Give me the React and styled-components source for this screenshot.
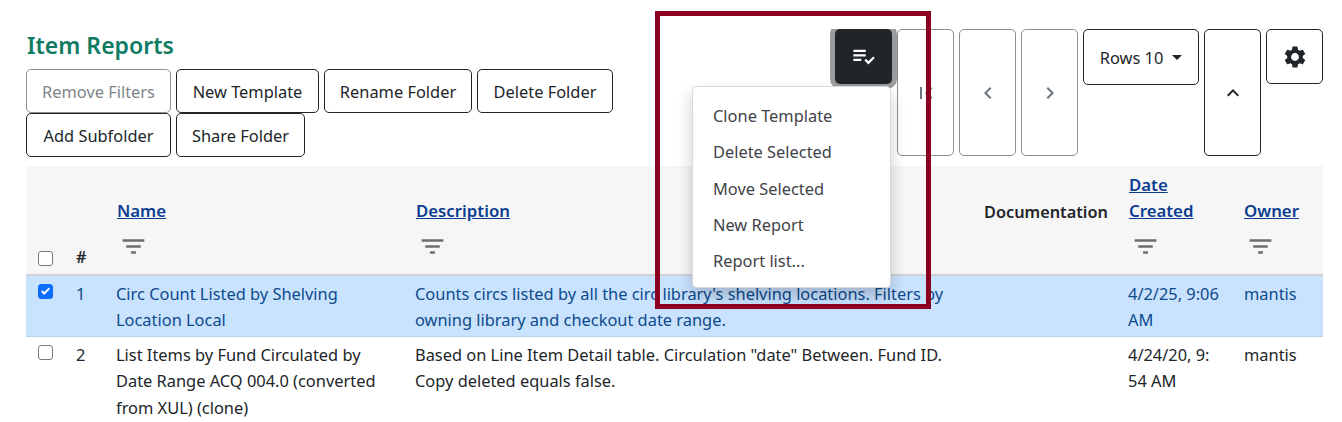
import React from "react";
import styled, { createGlobalStyle } from "styled-components";
import {
  MdPlaylistAddCheck,
  MdFirstPage,
  MdChevronLeft,
  MdChevronRight,
  MdKeyboardArrowUp,
  MdSettings,
  MdFilterList,
} from "react-icons/md";

const FONT = `"Noto Sans", "Open Sans", sans-serif`;

const GlobalStyle = createGlobalStyle`
  html, body {
    margin: 0;
    height: 422px;
    overflow: hidden;
    background: #fff;
  }
  body {
    font-family: ${FONT};
    font-size: 16.4px;
    color: #212529;
  }
`;

const Page = styled.div`
  position: relative;
  padding: 29px 19px 0 26px;
`;

const Top = styled.div`
  display: flex;
  justify-content: space-between;
  align-items: flex-start;
  height: 128px;
`;

const LeftCol = styled.div`
  width: 600px;
`;

const Title = styled.h1`
  margin: 0;
  height: 40px;
  padding-left: 1px;
  font-size: 23px;
  font-weight: 600;
  line-height: 32px;
  color: #0f7b63;
`;

const ButtonRows = styled.div`
  display: flex;
  flex-wrap: wrap;
  column-gap: 5px;
`;

const Button = styled.button`
  box-sizing: border-box;
  width: ${({ $w }) => $w}px;
  height: 44px;
  padding: 0;
  font: inherit;
  white-space: nowrap;
  color: ${({ disabled }) => (disabled ? "#80858a" : "#212529")};
  background: #fff;
  border: 1px solid ${({ disabled }) => (disabled ? "#8a8f94" : "#212529")};
  border-radius: 5px;
`;

const Toolbar = styled.div`
  display: flex;
  gap: 5px;
  align-items: flex-start;
`;

const ToolButton = styled.button`
  box-sizing: border-box;
  display: flex;
  align-items: center;
  justify-content: center;
  width: ${({ $w }) => $w || 57}px;
  height: ${({ $h }) => $h}px;
  padding: 0;
  font: inherit;
  color: ${({ disabled }) => (disabled ? "#6c757d" : "#212529")};
  background: #fff;
  border: 1px solid ${({ disabled }) => (disabled ? "#8a8f94" : "#212529")};
  border-radius: 5px;
`;

const ActionWrap = styled.div`
  position: relative;
`;

const ActionButton = styled.button`
  display: flex;
  align-items: center;
  justify-content: center;
  width: 57px;
  height: 55px;
  padding: 0;
  color: #fff;
  background: #212529;
  border: 0;
  border-radius: 5px;
  box-shadow: 0 0 0 5px #9b9c9d;
  clip-path: inset(0 -6px -6px -6px);
`;

const Menu = styled.div`
  position: absolute;
  top: 57px;
  right: 1px;
  z-index: 5;
  box-sizing: border-box;
  width: 199px;
  height: 202px;
  padding: 11px 0;
  background: #fff;
  border: 1px solid rgba(0, 0, 0, 0.15);
  border-radius: 5px;
  box-shadow: 0 8px 16px rgba(0, 0, 0, 0.2);
`;

const MenuItem = styled.div`
  height: 36.3px;
  padding-left: 20px;
  line-height: 36px;
  color: #3f4347;
  white-space: nowrap;
`;

const Caret = styled.span`
  margin-left: 9px;
  border-top: 5px solid #212529;
  border-left: 5px solid transparent;
  border-right: 5px solid transparent;
`;

const Table = styled.table`
  width: 1297px;
  margin-top: 9px;
  border-collapse: collapse;
  table-layout: fixed;
`;

const HeadCell = styled.th`
  box-sizing: border-box;
  height: 109px;
  padding: 0 8px ${({ $pb }) => $pb || 0}px;
  vertical-align: bottom;
  text-align: left;
  font-weight: 600;
  font-size: 16.3px;
  line-height: 26px;
  background: #f6f6f6;
  border-bottom: 2px solid #cfd1d3;
`;

const SortLink = styled.a`
  display: block;
  font-size: 16.8px;
  color: #0a3d91;
  text-decoration: underline;
`;

const FilterIcon = styled(MdFilterList)`
  display: block;
  margin: 8px 0 13px 2px;
  color: #6b6d70;
`;

const Row = styled.tr`
  background: ${({ $selected }) => ($selected ? "#c9e2fe" : "#fff")};
  color: ${({ $selected }) => ($selected ? "#0d4a8c" : "#212529")};
  border-bottom: 1px solid ${({ $selected }) => ($selected ? "#b6d4f2" : "transparent")};
`;

const Cell = styled.td`
  padding: 5px 8px 2px;
  vertical-align: top;
  line-height: 26.4px;
  white-space: pre-line;
`;

const TextCell = styled(Cell)`
  padding-left: 7px;
`;

const Check = styled.input`
  appearance: none;
  display: block;
  box-sizing: border-box;
  width: 15px;
  height: 15px;
  margin: ${({ $m }) => $m || "3px 0 0 4px"};
  background: #fff;
  border: 1px solid #77797c;
  border-radius: 3px;

  &:checked {
    border-color: #0d6efd;
    background: #0d6efd url("data:image/svg+xml,%3csvg xmlns='http://www.w3.org/2000/svg' viewBox='0 0 20 20'%3e%3cpath fill='none' stroke='%23fff' stroke-linecap='round' stroke-linejoin='round' stroke-width='3' d='m5 10 3 3 7-7'/%3e%3c/svg%3e") center / 100% no-repeat;
  }
`;

const RedBox = styled.div`
  position: absolute;
  left: 655px;
  top: 11px;
  z-index: 10;
  box-sizing: border-box;
  width: 276px;
  height: 298px;
  border: 5px solid #8b0020;
  pointer-events: none;
`;

const columns = [42, 41, 299, 568, 145, 115, 87];

const folderButtons = [
  { label: "Remove Filters", w: 145, disabled: true },
  { label: "New Template", w: 143 },
  { label: "Rename Folder", w: 148 },
  { label: "Delete Folder", w: 136 },
  { label: "Add Subfolder", w: 145 },
  { label: "Share Folder", w: 129 },
];

const menuItems = ["Clone Template", "Delete Selected", "Move Selected", "New Report", "Report list..."];

const rows = [
  {
    n: 1,
    selected: true,
    name: "Circ Count Listed by Shelving Location Local",
    description: "Counts circs listed by all the circ library's shelving locations. Filters by owning library and checkout date range.",
    date: "4/2/25, 9:06 AM",
  },
  {
    n: 2,
    name: "List Items by Fund Circulated by Date Range ACQ 004.0 (converted from XUL) (clone)",
    description: 'Based on Line Item Detail table. Circulation "date" Between. Fund ID. Copy deleted equals false.',
    date: "4/24/20, 9:\n54 AM",
  },
];

const SortHead = ({ children }) => (
  <HeadCell>
    <SortLink>{children}</SortLink>
    <FilterIcon size={29} />
  </HeadCell>
);

export default function App() {
  return (
    <Page>
      <GlobalStyle />
      <Top>
        <LeftCol>
          <Title>Item Reports</Title>
          <ButtonRows>
            {folderButtons.map((b) => (
              <Button key={b.label} $w={b.w} disabled={b.disabled}>
                {b.label}
              </Button>
            ))}
          </ButtonRows>
        </LeftCol>
        <Toolbar>
          <ActionWrap>
            <ActionButton>
              <MdPlaylistAddCheck size={27} />
            </ActionButton>
            <Menu>
              {menuItems.map((item) => (
                <MenuItem key={item}>{item}</MenuItem>
              ))}
            </Menu>
          </ActionWrap>
          <ToolButton $h={127} disabled>
            <MdFirstPage size={24} />
          </ToolButton>
          <ToolButton $h={127} disabled>
            <MdChevronLeft size={24} />
          </ToolButton>
          <ToolButton $h={127} disabled>
            <MdChevronRight size={24} />
          </ToolButton>
          <ToolButton $w={116} $h={56}>
            Rows 10
            <Caret />
          </ToolButton>
          <ToolButton $h={127}>
            <MdKeyboardArrowUp size={24} />
          </ToolButton>
          <ToolButton $h={55}>
            <MdSettings size={26} />
          </ToolButton>
        </Toolbar>
      </Top>
      <Table>
        <colgroup>
          {columns.map((w, i) => (
            <col key={i} style={{ width: w }} />
          ))}
        </colgroup>
        <thead>
          <tr>
            <HeadCell $pb={8}>
              <Check type="checkbox" $m="0 0 0 4px" />
            </HeadCell>
            <HeadCell $pb={4}>#</HeadCell>
            <SortHead>Name</SortHead>
            <SortHead>Description</SortHead>
            <HeadCell $pb={49}>Documentation</HeadCell>
            <SortHead>
              Date
              <br />
              Created
            </SortHead>
            <SortHead>Owner</SortHead>
          </tr>
        </thead>
        <tbody>
          {rows.map((r) => (
            <Row key={r.n} $selected={r.selected}>
              <Cell>
                <Check type="checkbox" defaultChecked={r.selected} />
              </Cell>
              <Cell>{r.n}</Cell>
              <TextCell>{r.name}</TextCell>
              <TextCell>{r.description}</TextCell>
              <Cell />
              <TextCell>{r.date}</TextCell>
              <Cell>mantis</Cell>
            </Row>
          ))}
        </tbody>
      </Table>
      <RedBox />
    </Page>
  );
}
